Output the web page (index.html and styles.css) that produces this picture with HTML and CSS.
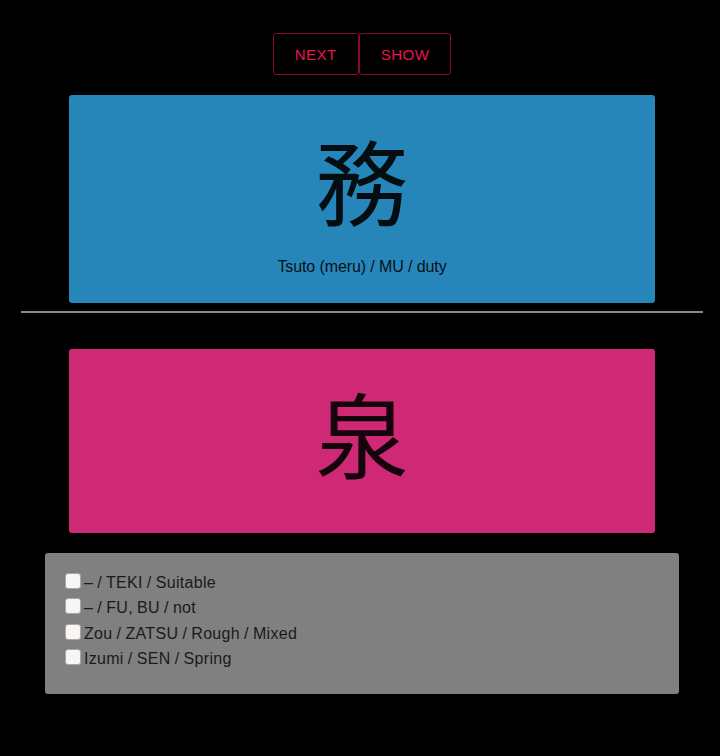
FILE: index.html
```html
<!DOCTYPE html>
<html lang="ja">
<head>
    <meta charset="UTF-8" />
    <title>Kanji</title>
    <link rel="stylesheet" href="styles.css">
</head>
<body>

    <div class="page">
        <div class="controls">
            <button class="btn">NEXT</button>
            <button class="btn">SHOW</button>
        </div>

        <div class="card card-answer">
            <div class="kanji">務</div>
            <div class="reading">Tsuto (meru) / MU / duty</div>
        </div>

        <hr class="divider" />

        <div class="card card-question">
            <div class="kanji">泉</div>
        </div>

        <div class="choices">
            <label class="choice"><input type="checkbox" />– / TEKI / Suitable</label>
            <label class="choice"><input type="checkbox" />– / FU, BU / not</label>
            <label class="choice"><input type="checkbox" />Zou / ZATSU / Rough / Mixed</label>
            <label class="choice"><input type="checkbox" />Izumi / SEN / Spring</label>
        </div>
    </div>

</body>
</html>
```

FILE: styles.css
```css
body {
    background-color: #000;
    margin: 0;
    font-family: 'Liberation Sans', Arial, sans-serif;
}

.page {
    padding: 33px 17px 40px 21px;
}

.controls {
    display: flex;
    justify-content: center;
}

.btn {
    background-color: #000;
    color: #e8144f;
    border: 1px solid #8a0a2e;
    border-radius: 3px;
    font-family: 'Liberation Sans', Arial, sans-serif;
    font-size: 15px;
    letter-spacing: 0.5px;
    height: 42px;
    padding: 0 21px;
    cursor: pointer;
}

.card {
    width: 586px;
    margin: 0 auto;
    border-radius: 3px;
    text-align: center;
    color: rgba(0, 0, 0, 0.9);
    box-sizing: border-box;
}

.card-answer {
    background-color: #2786b9;
    margin-top: 20px;
    height: 208px;
    padding-top: 26px;
}

.card-question {
    background-color: #cf2874;
    margin-top: 36px;
    height: 184px;
    padding-top: 25px;
}

.kanji {
    font-family: 'Noto Sans CJK JP', sans-serif;
    font-size: 93px;
    line-height: 116px;
}

.reading {
    font-size: 16px;
    letter-spacing: -0.1px;
    margin-top: 21px;
}

.divider {
    border: 0;
    border-top: 2px solid #8a8a8a;
    margin: 8px 0 0;
}

.choices {
    background-color: #808080;
    width: 634px;
    margin: 20px auto 0;
    box-sizing: border-box;
    height: 141px;
    border-radius: 3px;
    padding: 17px 20px;
}

.choice {
    display: flex;
    align-items: center;
    font-size: 16px;
    letter-spacing: 0.3px;
    word-spacing: -0.6px;
    color: #1a1a1a;
    height: 25.5px;
}

.choice input {
    appearance: none;
    margin: -4px 3px 0 0;
    width: 16px;
    height: 16px;
    background-color: #f8f6f4;
    border: 1px solid #a9a6a3;
    border-radius: 3px;
    box-sizing: border-box;
}
```
